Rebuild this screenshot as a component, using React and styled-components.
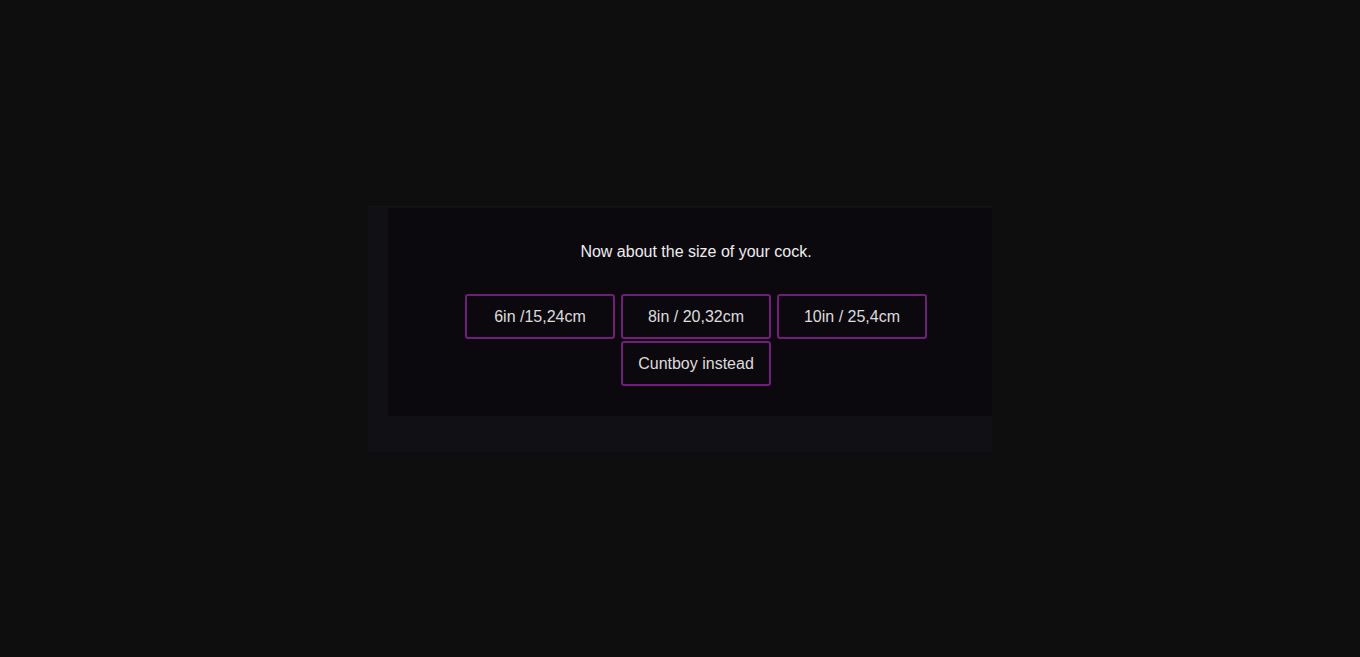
import React from "react";
import styled, { createGlobalStyle } from "styled-components";

const Global = createGlobalStyle`
  html, body { margin: 0; padding: 0; background: #0e0e0e; }
  body { font-family: "Liberation Sans", Arial, sans-serif; }
`;

const Page = styled.div`
  width: 1360px;
  height: 657px;
  display: flex;
  align-items: center;
  justify-content: center;
`;

const Frame = styled.div`
  width: 624px;
  box-sizing: border-box;
  padding: 1px 0 36px 20px;
  background: #111015;
  border-top: 1px solid #141318;
  margin-top: 1px;
`;

const Panel = styled.div`
  background: #0c090e;
  padding: 35px 0 30px 12px;
  display: flex;
  flex-direction: column;
  align-items: center;
`;

const Prompt = styled.p`
  margin: 0 0 33px;
  font-size: 16px;
  line-height: 18px;
  color: #eeeeee;
`;

const Choices = styled.div`
  width: 462px;
  display: flex;
  flex-wrap: wrap;
  justify-content: center;
  column-gap: 6px;
  row-gap: 2px;
`;

const Choice = styled.button`
  width: 150px;
  height: 45px;
  box-sizing: border-box;
  background: #0c090e;
  border: 2px solid #721d7c;
  border-radius: 3px;
  color: #dcdcdc;
  font-family: "Liberation Sans", Arial, sans-serif;
  font-size: 16px;
  cursor: pointer;
  padding: 0;
`;

const options = ["6in /15,24cm", "8in / 20,32cm", "10in / 25,4cm", "Cuntboy instead"];

export default function App() {
  return (
    <>
      <Global />
      <Page>
        <Frame>
          <Panel>
            <Prompt>Now about the size of your cock.</Prompt>
            <Choices>
              {options.map((o) => (
                <Choice key={o}>{o}</Choice>
              ))}
            </Choices>
          </Panel>
        </Frame>
      </Page>
    </>
  );
}
